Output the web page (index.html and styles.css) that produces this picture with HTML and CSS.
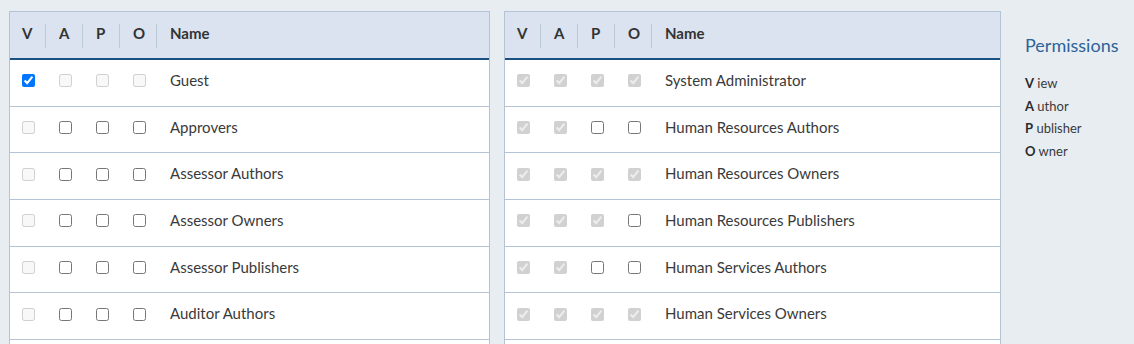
FILE: index.html
```html
<!DOCTYPE html>
<html lang="en">
<head>
<meta charset="utf-8">
<title>Permissions</title>
<link rel="stylesheet" href="styles.css">
</head>
<body>
<div class="page">
  <table class="perm-table left">
    <thead>
      <tr><th class="c">V</th><th class="c">A</th><th class="c">P</th><th class="c">O</th><th class="name">Name</th></tr>
    </thead>
    <tbody>
      <tr><td class="c"><input type="checkbox" checked></td><td class="c"><input type="checkbox" disabled></td><td class="c"><input type="checkbox" disabled></td><td class="c"><input type="checkbox" disabled></td><td class="name">Guest</td></tr>
      <tr><td class="c"><input type="checkbox" disabled></td><td class="c"><input type="checkbox"></td><td class="c"><input type="checkbox"></td><td class="c"><input type="checkbox"></td><td class="name">Approvers</td></tr>
      <tr><td class="c"><input type="checkbox" disabled></td><td class="c"><input type="checkbox"></td><td class="c"><input type="checkbox"></td><td class="c"><input type="checkbox"></td><td class="name">Assessor Authors</td></tr>
      <tr><td class="c"><input type="checkbox" disabled></td><td class="c"><input type="checkbox"></td><td class="c"><input type="checkbox"></td><td class="c"><input type="checkbox"></td><td class="name">Assessor Owners</td></tr>
      <tr><td class="c"><input type="checkbox" disabled></td><td class="c"><input type="checkbox"></td><td class="c"><input type="checkbox"></td><td class="c"><input type="checkbox"></td><td class="name">Assessor Publishers</td></tr>
      <tr><td class="c"><input type="checkbox" disabled></td><td class="c"><input type="checkbox"></td><td class="c"><input type="checkbox"></td><td class="c"><input type="checkbox"></td><td class="name">Auditor Authors</td></tr>
      <tr class="filler"><td colspan="5"></td></tr>
    </tbody>
  </table>

  <table class="perm-table right">
    <thead>
      <tr><th class="c">V</th><th class="c">A</th><th class="c">P</th><th class="c">O</th><th class="name">Name</th></tr>
    </thead>
    <tbody>
      <tr><td class="c"><input type="checkbox" checked disabled></td><td class="c"><input type="checkbox" checked disabled></td><td class="c"><input type="checkbox" checked disabled></td><td class="c"><input type="checkbox" checked disabled></td><td class="name">System Administrator</td></tr>
      <tr><td class="c"><input type="checkbox" checked disabled></td><td class="c"><input type="checkbox" checked disabled></td><td class="c"><input type="checkbox"></td><td class="c"><input type="checkbox"></td><td class="name">Human Resources Authors</td></tr>
      <tr><td class="c"><input type="checkbox" checked disabled></td><td class="c"><input type="checkbox" checked disabled></td><td class="c"><input type="checkbox" checked disabled></td><td class="c"><input type="checkbox" checked disabled></td><td class="name">Human Resources Owners</td></tr>
      <tr><td class="c"><input type="checkbox" checked disabled></td><td class="c"><input type="checkbox" checked disabled></td><td class="c"><input type="checkbox" checked disabled></td><td class="c"><input type="checkbox"></td><td class="name">Human Resources Publishers</td></tr>
      <tr><td class="c"><input type="checkbox" checked disabled></td><td class="c"><input type="checkbox" checked disabled></td><td class="c"><input type="checkbox"></td><td class="c"><input type="checkbox"></td><td class="name">Human Services Authors</td></tr>
      <tr><td class="c"><input type="checkbox" checked disabled></td><td class="c"><input type="checkbox" checked disabled></td><td class="c"><input type="checkbox" checked disabled></td><td class="c"><input type="checkbox" checked disabled></td><td class="name">Human Services Owners</td></tr>
      <tr class="filler"><td colspan="5"></td></tr>
    </tbody>
  </table>

  <aside class="legend">
    <h2 class="legend-title">Permissions</h2>
    <ul class="legend-list">
      <li><strong>V</strong> iew</li>
      <li><strong>A</strong> uthor</li>
      <li><strong>P</strong> ublisher</li>
      <li><strong>O</strong> wner</li>
    </ul>
  </aside>
</div>
</body>
</html>
```

FILE: styles.css
```css
html, body {
  margin: 0;
  padding: 0;
  background: #e8edf2;
}

body {
  font-family: Lato, "Liberation Sans", sans-serif;
  color: #3a3a3a;
}

.page {
  display: grid;
  grid-template-columns: 481px 497px 1fr;
  column-gap: 14px;
  align-items: start;
  padding: 11px 0 0 9px;
}

.perm-table {
  border-collapse: separate;
  border-spacing: 0;
  border: 1px solid #b5c4d4;
  border-bottom: none;
  background: #ffffff;
  width: 100%;
  font-size: 15px;
}

.perm-table th {
  height: 42px;
  padding: 0 12px 4px;
  text-align: left;
  font-weight: 700;
  font-size: 15px;
  color: #333333;
  background-color: #dae3ef;
  border-bottom: 2px solid #1a5183;
}

.perm-table th.c {
  background-image: linear-gradient(#bccad8, #bccad8);
  background-repeat: no-repeat;
  background-size: 1px 24px;
  background-position: right 1px top 12px;
}

.perm-table td {
  padding: 10px 12px 14px;
  line-height: 21.67px;
  border-bottom: 1px solid #b5c4d4;
  vertical-align: middle;
}

.perm-table .c {
  width: 13px;
  box-sizing: content-box;
}

.perm-table td.c input {
  display: block;
  margin: 0;
  width: 13px;
  height: 13px;
}

.perm-table .name {
  padding-left: 12px;
  white-space: nowrap;
}

.perm-table .filler td {
  height: 40px;
  padding: 0;
  border-bottom: none;
}

.legend {
  padding: 22px 0 0 10px;
}

.legend-title {
  margin: 0;
  font-family: Lato, "Liberation Sans", sans-serif;
  font-size: 18px;
  font-weight: 400;
  color: #2d6399;
  line-height: 24px;
}

.legend-list {
  list-style: none;
  margin: 15px 0 0;
  padding: 0;
  font-size: 13px;
  line-height: 22.5px;
  color: #3a3a3a;
}

.legend-list strong {
  font-weight: 700;
  color: #2a2a2a;
}
```
